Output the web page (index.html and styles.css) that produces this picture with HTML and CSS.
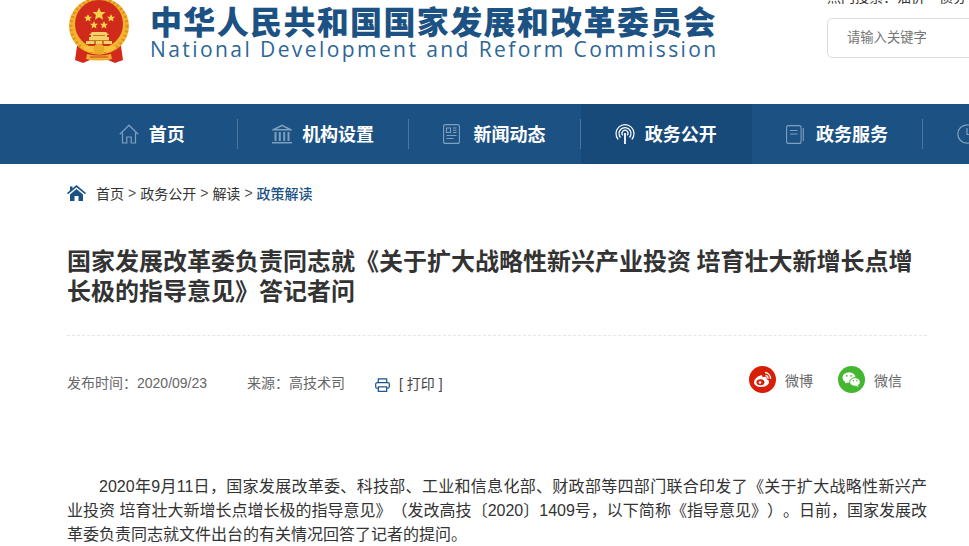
FILE: index.html
```html
<!DOCTYPE html>
<html lang="zh-CN">
<head>
<meta charset="utf-8">
<title>国家发展改革委</title>
<link rel="stylesheet" href="styles.css">
</head>
<body>
<header class="top">
  <div class="brand">
    <svg class="emblem" viewBox="0 0 62 66" width="62" height="66" aria-hidden="true">
      <defs>
        <polygon id="st" points="0,-5 1.470,-1.550 5,-1.550 2.350,.800 3.100,4.500 0,2.500 -3.100,4.500 -2.350,.800 -5,-1.550 -1.470,-1.550"/>
      </defs>
      <path d="M9 47 L7 61 L15 64 L22 61 L40 61 L47 64 L55 61 L53 47 Z" fill="#d3291c"/>
      <ellipse cx="31" cy="27" rx="30" ry="28.500" fill="#f2b32e"/>
      <ellipse cx="31" cy="27" rx="28" ry="27" fill="none" stroke="#e0901c" stroke-width="3" stroke-dasharray="2 2.500"/>
      <circle cx="31" cy="25" r="24" fill="#cf2a1c"/>
      <use href="#st" x="31" y="15" fill="#f8d24a" transform="translate(-9.300 -4.500) scale(1.300)"/>
      <use href="#st" x="20" y="19" fill="#f8d24a" transform="translate(4 3.800) scale(.8)"/>
      <use href="#st" x="43" y="19" fill="#f8d24a" transform="translate(8.600 3.800) scale(.8)"/>
      <use href="#st" x="26" y="26" fill="#f8d24a" transform="translate(5.200 5.200) scale(.8)"/>
      <use href="#st" x="36" y="26" fill="#f8d24a" transform="translate(7.200 5.200) scale(.8)"/>
      <path d="M24 33h14l3 3h-2v2h2v4h3v3H18v-3h3v-4h2v-2h-2z" fill="#f7cf6a"/>
      <path d="M25 36h12v1H25zM21 41h20v1H21zM26 42h2v3h-2zM34 42h2v3h-2z" fill="#c67a20"/>
      <path d="M17 47h28l3 2-6 4H20l-6-4z" fill="#f6c23c"/>
      <circle cx="31" cy="50" r="5.500" fill="#eda92a"/>
      <path d="M19 55c8 2 16 2 24 0l1 5c-8 2-18 2-26 0z" fill="#f0ae2e"/>
      <path d="M22 57.500h18v1H22z" fill="#c9401d"/>
    </svg>
    <div class="brand-text">
      <div class="brand-cn">中华人民共和国国家发展和改革委员会</div>
      <div class="brand-en">National Development and Reform Commission</div>
    </div>
  </div>
  <div class="search">
    <div class="hot"><span>热门搜索：油价　债券</span></div>
    <div class="search-box">请输入关键字</div>
  </div>
</header>

<nav class="nav">
  <ul class="nav-list">
    <li class="nav-item"><a class="nav-link">
      <svg class="nav-ico" width="20" height="20" viewBox="0 0 20 20" fill="none" stroke="#7f9fbd" stroke-width="1.2"><path d="M0.8 10.2 10 1.2l9.2 9"/><path d="M3.5 8.5V19h4.3v-6h4.4v6h4.3V8.500"/></svg>
      <span class="nav-txt">首页</span></a></li>
    <li class="nav-item"><a class="nav-link">
      <svg class="nav-ico" width="20" height="20" viewBox="0 0 20 20" fill="#7f9fbd"><path d="M10 .5 20 5.600v1H0v-1zM10 2.200 4.600 5h10.800z" fill-rule="evenodd"/><path d="M2.500 8h2v9h-2zM6.800 8h2v9h-2zM11.200 8h2v9h-2zM15.500 8h2v9h-2zM0 18h20v1.500H0z"/></svg>
      <span class="nav-txt">机构设置</span></a></li>
    <li class="nav-item"><a class="nav-link">
      <svg class="nav-ico nav-ico-news" width="17" height="20" viewBox="0 0 17 20" fill="none" stroke="#7f9fbd" stroke-width="1.100"><rect x=".6" y=".6" width="15.800" height="18.800" rx="2"/><path d="M3.500 4h4v4.500h-4zM10 4h3.500M10 6.200h3.500M10 8.500h3.500M3.500 11.500h10M3.500 14.500h7"/></svg>
      <span class="nav-txt">新闻动态</span></a></li>
    <li class="nav-item nav-item-active"><a class="nav-link">
      <svg class="nav-ico" width="20" height="20" viewBox="0 0 20 20" fill="none" stroke="#fff" stroke-width="1.200"><path d="M3.200 15.500a9 9 0 1 1 13.600 0"/><path d="M5.500 13.500a6 6 0 1 1 9 0"/><path d="M7.800 11.300a3 3 0 1 1 4.400 0"/><path d="M10 9v11" stroke-width="1.800"/></svg>
      <span class="nav-txt">政务公开</span></a></li>
    <li class="nav-item"><a class="nav-link">
      <svg class="nav-ico nav-ico-book" width="18" height="19" viewBox="0 0 18 19" fill="none" stroke="#7f9fbd" stroke-width="1.100"><rect x=".6" y=".6" width="14.500" height="17.800" rx="2"/><path d="M4 5.500h7.500M4 9h7.500M17.300 3v13"/></svg>
      <span class="nav-txt">政务服务</span></a></li>
    <li class="nav-item"><a class="nav-link">
      <svg class="nav-ico" width="20" height="20" viewBox="0 0 20 20" fill="none" stroke="#7f9fbd" stroke-width="1.200"><circle cx="10" cy="10" r="9.200"/><path d="M10 4v6.500h5"/></svg>
      <span class="nav-txt">互动交流</span></a></li>
  </ul>
</nav>

<main class="page">
  <div class="crumb">
    <svg class="crumb-home" width="19" height="16" viewBox="0 0 19 16" fill="#1c5283"><path d="M9.500 0 19 8l-1 1.200-8.500-7-8.500 7L0 8l3-2.500V1.500h2.500v2z"/><path d="M3 9.500 9.500 4 16 9.500V16h-4.500v-5h-4v5H3z"/></svg>
    <span>首页</span><span class="crumb-sep">&gt;</span><span>政务公开</span><span class="crumb-sep">&gt;</span><span>解读</span><span class="crumb-sep">&gt;</span><span class="crumb-now">政策解读</span>
  </div>

  <h1 class="title">国家发展改革委负责同志就《关于扩大战略性新兴产业投资 培育壮大新增长点增长极的指导意见》答记者问</h1>

  <div class="meta">
    <div class="meta-left">
      <span class="meta-date">发布时间：2020/09/23</span>
      <span class="meta-src">来源：高技术司</span>
      <svg class="print-ico" width="15" height="14" viewBox="0 0 16 15" fill="none" stroke="#1c5283" stroke-width="1.300"><path d="M3.500 5V1h9v4"/><rect x=".7" y="5" width="14.600" height="6" rx="1.500"/><rect x="3.500" y="9.500" width="9" height="4.800" fill="#fff"/></svg>
      <span class="print">[ 打印 ]</span>
    </div>
    <div class="share">
      <span class="share-item">
        <svg width="27" height="27" viewBox="0 0 27 27"><circle cx="13.500" cy="13.500" r="13.500" fill="#d81e06"/><path d="M11.500 9.500c-3.500 1-6.500 4-6.500 7 0 2.700 3.300 4.500 7 4.500 4.500 0 8-2.400 8-5 0-1.700-1.500-2.400-2.500-2.700.5-1.300.3-2.300-1-2.500-1-.1-2.300.3-3 .7.200-1.500-.5-2.500-2-2z" fill="#fff"/><ellipse cx="11.500" cy="16.300" rx="4" ry="3" fill="#d81e06"/><circle cx="11" cy="16.500" r="1.300" fill="#fff"/><path d="M16 6.500a6 6 0 0 1 5.500 6.500M16.500 9.300a3 3 0 0 1 2.500 3.300" stroke="#fff" stroke-width="1.300" fill="none"/></svg>
        微博</span>
      <span class="share-item">
        <svg width="27" height="27" viewBox="0 0 27 27"><circle cx="13.500" cy="13.500" r="13.500" fill="#43b72f"/><ellipse cx="11" cy="11.500" rx="6.500" ry="5.300" fill="#fff"/><path d="m7.500 15-.5 2.500 3-1.500z" fill="#fff"/><ellipse cx="17" cy="16" rx="5.300" ry="4.300" fill="#fff" stroke="#43b72f"/><path d="m19.500 19 1 2-3-1.300z" fill="#fff"/><circle cx="8.800" cy="9.800" r=".9" fill="#43b72f"/><circle cx="13" cy="9.800" r=".9" fill="#43b72f"/><circle cx="15.300" cy="14.800" r=".7" fill="#43b72f"/><circle cx="18.800" cy="14.800" r=".7" fill="#43b72f"/></svg>
        微信</span>
    </div>
  </div>

  <p class="article">2020年9月11日，国家发展改革委、科技部、工业和信息化部、财政部等四部门联合印发了《关于扩大战略性新兴产业投资 培育壮大新增长点增长极的指导意见》（发改高技〔2020〕1409号，以下简称《指导意见》）。日前，国家发展改革委负责同志就文件出台的有关情况回答了记者的提问。</p>
</main>
</body>
</html>
```
FILE: styles.css
```css
* { box-sizing: border-box; }
html, body { margin: 0; padding: 0; }
body {
  width: 969px;
  height: 546px;
  overflow: hidden;
  background: #fff;
  color: #333;
  font-family: "Liberation Sans", "Noto Sans CJK SC", sans-serif;
  text-spacing-trim: space-all;
}
.top {
  height: 104px;
  display: flex;
  justify-content: space-between;
  padding-left: 68px;
  overflow: hidden;
}
.brand { display: flex; align-items: flex-start; gap: 20px; }
.emblem { margin-top: -1px; flex: none; }
.brand-text { width: 600px; }
.brand-cn {
  font-family: "Noto Sans CJK SC", sans-serif;
  font-size: 32px;
  line-height: 40px;
  font-weight: 900;
  letter-spacing: 1.350px;
  color: #1c5283;
  white-space: nowrap;
}
.brand-en {
  font-family: "Open Sans", sans-serif;
  font-size: 21px;
  line-height: 18px;
  letter-spacing: 2.420px;
  color: #2d6697;
  white-space: nowrap;
}
.search { width: 142px; flex: none; }
.hot {
  height: 8px;
  overflow: hidden;
  font-size: 14px;
  color: #333;
  white-space: nowrap;
}
.hot span { display: block; margin-top: -13px; line-height: 20px; }
.search-box {
  margin-top: 10px;
  height: 40px;
  width: 160px;
  border: 1px solid #ddd;
  border-radius: 5px;
  padding-left: 20px;
  font-size: 13.300px;
  line-height: 37px;
  color: #757575;
  text-indent: -1px;
}
.nav { height: 60px; background: #1c5283; overflow: hidden; }
.nav-list {
  list-style: none;
  margin: 0;
  padding: 0 0 0 66.700px;
  display: flex;
  width: 1200px;
}
.nav-item { flex: 0 0 171.300px; height: 60px; padding: 15px 0; }
.nav-link {
  height: 30px;
  display: flex;
  align-items: center;
  justify-content: center;
  gap: 10px;
  border-right: 1px solid #4f779d;
  color: #fff;
  font-size: 18px;
  font-weight: 700;
  font-family: "Noto Sans CJK SC", sans-serif;
}
.nav-txt { margin-top: -2px; }
.nav-item-active { background: #174a79; }
.nav-item-active .nav-link { border-right-color: transparent; }
.nav-ico { flex: none; }
.nav-ico-news { margin-right: 3px; }
.nav-ico-book { margin-right: 2px; }
.page { padding: 0 42px 0 67px; }
.crumb {
  height: 60px;
  display: flex;
  align-items: center;
  font-size: 14px;
  color: #333;
  padding-bottom: 2px;
}
.crumb-home { margin-right: 10px; }
.crumb-sep { margin: 0 4px; color: #555; }
.crumb-now { color: #1c5283; font-weight: 500; }
.title {
  margin: 21px 0 0;
  font-size: 24px;
  line-height: 30px;
  font-weight: 700;
  color: #333;
  font-family: "Noto Sans CJK SC", sans-serif;
  padding-bottom: 30px;
  border-bottom: 1px dashed #e5e5e5;
}
.meta {
  margin-top: 23px;
  height: 46px;
  display: flex;
  justify-content: space-between;
  align-items: center;
  font-size: 14px;
  color: #666;
}
.meta-left { display: flex; align-items: center; }
.meta-src { margin-left: 40px; }
.print-ico { margin-left: 30px; margin-top: 5px; }
.print { margin-left: 9px; margin-top: 2px; color: #444; }
.share { display: flex; gap: 25px; padding-right: 25px; margin-bottom: 5px; }
.share-item { display: flex; align-items: center; gap: 9px; }
.article {
  margin: 70px 0 0;
  font-size: 16px;
  line-height: 24px;
  color: #333;
  text-indent: 2em;
  text-align: justify;
}
```
